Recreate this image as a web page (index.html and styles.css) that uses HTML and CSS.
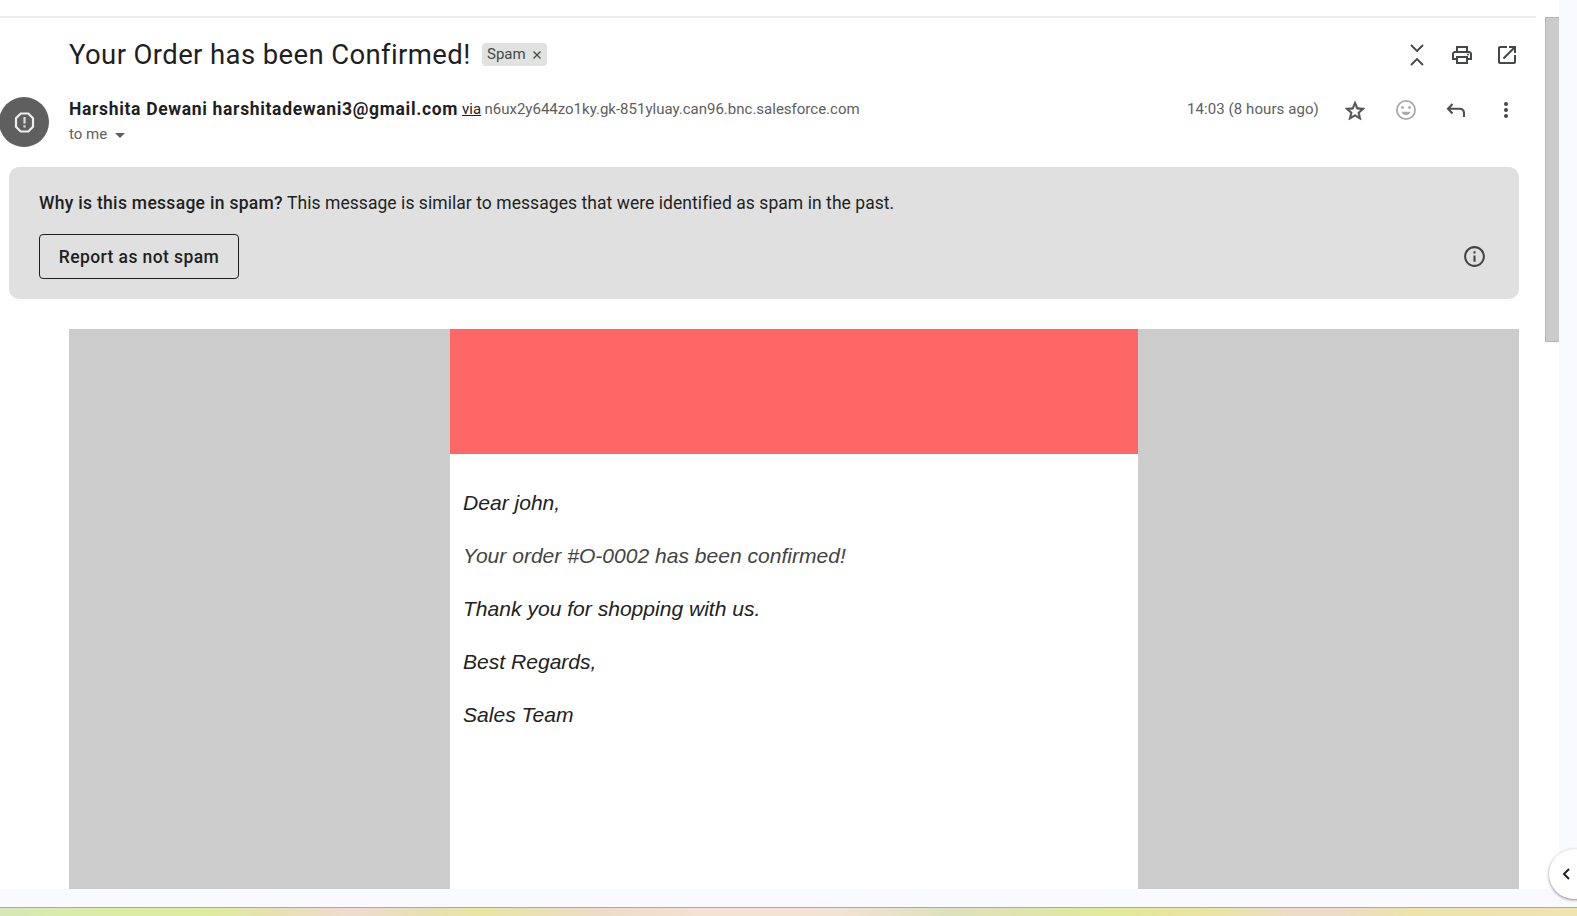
FILE: index.html
```html
<!DOCTYPE html>
<html lang="en">
<head>
<meta charset="utf-8">
<title>Your Order has been Confirmed!</title>
<link rel="stylesheet" href="styles.css">
</head>
<body>
<div class="window">
  <main class="mail">
    <div class="toolbar"></div>
    <header class="subject-row">
      <h1 class="subject">Your Order has been Confirmed!</h1>
      <span class="chip"><span class="chip-label">Spam</span><svg class="chip-x" viewBox="0 0 8 8"><path d="M.5.5l7 7M7.500.5l-7 7"/></svg></span>
      <div class="actions">
        <svg class="icon" viewBox="0 0 24 24"><path d="M6 2l6 6 6-6M6 22l6-6 6 6" fill="none" stroke="#444746" stroke-width="1.800"/></svg>
        <svg class="icon" viewBox="0 0 24 24"><path d="M19 8h-1V3H6v5H5c-1.660 0-3 1.340-3 3v6h4v4h12v-4h4v-6c0-1.660-1.340-3-3-3zM8 5h8v3H8V5zm8 14H8v-4h8v4zm2-4v-2H6v2H4v-4c0-.55.450-1 1-1h14c.55 0 1 .450 1 1v4h-2z"/><circle cx="18" cy="11.500" r="1"/></svg>
        <svg class="icon" viewBox="0 0 24 24"><path d="M19 19H5V5h7V3H5c-1.110 0-2 .9-2 2v14c0 1.100.890 2 2 2h14c1.100 0 2-.9 2-2v-7h-2v7zM14 3v2h3.590l-9.830 9.830 1.410 1.410L19 6.410V10h2V3h-7z"/></svg>
      </div>
    </header>
    <section class="sender-row">
      <svg class="avatar" viewBox="0 0 50 50"><circle cx="25" cy="25" r="25" fill="#5f5f5f"/><path d="M21.700 16.500h7.600l4.700 4.700v8.600L29.300 34.500h-7.600L17 29.800v-8.600z" fill="none" stroke="#eee" stroke-width="2.200"/><path d="M25.500 20v6.600M25.500 28.300v2.200" stroke="#ddd" stroke-width="2.200"/></svg>
      <div class="who">
        <div class="from"><b class="name">Harshita Dewani harshitadewani3@gmail.com</b><span class="via">via</span><span class="domain">n6ux2y644zo1ky.gk-851yluay.can96.bnc.salesforce.com</span></div>
        <div class="to"><span>to me</span><i class="caret"></i></div>
      </div>
      <div class="meta">
        <span class="time">14:03 (8 hours ago)</span>
        <svg class="icon star" viewBox="0 0 24 24"><path d="M22 9.240l-7.190-.620L12 2 9.190 8.630 2 9.240l5.460 4.730L5.820 21 12 17.270 18.180 21l-1.630-7.030L22 9.240zM12 15.400l-3.760 2.270 1-4.280-3.320-2.880 4.380-.380L12 6.100l1.710 4.040 4.380.380-3.320 2.880 1 4.280L12 15.400z"/></svg>
        <svg class="icon smile" viewBox="0 0 24 24"><circle cx="12" cy="12" r="9.100" fill="none" stroke="#aaa" stroke-width="1.800"/><circle cx="8.500" cy="9.500" r="1.400"/><circle cx="15.500" cy="9.500" r="1.400"/><path d="M7.500 13.700h9c-.7 2.200-2.400 3.400-4.500 3.400s-3.800-1.200-4.500-3.400z"/></svg>
        <svg class="icon reply" viewBox="0 0 24 24"><path d="M8.500 6L4 10.700l4.500 4.700M4 10.700h11.500c3 0 4.500 1.600 4.500 4.500v3.800" fill="none" stroke="#505050" stroke-width="2.100"/></svg>
        <svg class="icon more" viewBox="0 0 24 24"><circle cx="12" cy="6" r="2"/><circle cx="12" cy="12" r="2"/><circle cx="12" cy="18" r="2"/></svg>
      </div>
    </section>
    <section class="banner">
      <p class="reason"><b class="why">Why is this message in spam?</b><span class="because">This message is similar to messages that were identified as spam in the past.</span></p>
      <div class="banner-actions">
        <button class="report">Report as not spam</button>
        <svg class="info" viewBox="0 0 24 24"><path d="M11 7h2v2h-2zm0 4h2v6h-2zm1-9C6.480 2 2 6.480 2 12s4.480 10 10 10 10-4.480 10-10S17.520 2 12 2zm0 18c-4.410 0-8-3.590-8-8s3.590-8 8-8 8 3.590 8 8-3.590 8-8 8z"/></svg>
      </div>
    </section>
    <section class="message">
      <article class="letter">
        <div class="hero"></div>
        <div class="copy">
          <p>Dear john,</p>
          <p class="soft">Your order #O-0002 has been confirmed!</p>
          <p>Thank you for shopping with us.</p>
          <p>Best Regards,</p>
          <p>Sales Team</p>
        </div>
      </article>
    </section>
  </main>
  <div class="scrollbar"><div class="thumb"></div></div>
  <button class="panel-toggle"><svg viewBox="0 0 8 12"><path d="M7 1L2 6l5 5"/></svg></button>
</div>
<div class="desktop"></div>
</body>
</html>
```
FILE: styles.css
```css
* { box-sizing: border-box; }
body { margin: 0; width: 1577px; height: 916px; overflow: hidden; display: flex; flex-direction: column; background: #f8faff; color: #202124; font-family: Roboto, "Liberation Sans", sans-serif; }
h1, p { margin: 0; font-weight: 400; }
svg { display: block; flex: none; }
button { padding: 0; font: inherit; color: inherit; }
h1, span, b { white-space: nowrap; }
.window { position: relative; display: flex; height: 907px; overflow: hidden; }
.mail { display: flex; flex-direction: column; width: 1545px; height: 889px; background: #fff; }
.toolbar { flex: none; width: 1536px; height: 18px; border-bottom: 2px solid #eee; }
.subject-row { display: flex; flex: none; align-items: center; height: 73px; padding: 1px 26px 0 69px; }
.subject { width: 413px; font-size: 27.500px; line-height: 36px; letter-spacing: .38px; color: #1f1f1f; }
.chip { display: flex; align-items: center; width: 65px; height: 23px; padding: 0 6px 0 5px; margin-top: -1px; justify-content: space-between; border-radius: 4px; background: #e0e2e0; color: #444746; font-size: 15px; }
.chip-label { padding-bottom: 2px; }
.chip-x { width: 8px; height: 8px; stroke: #444746; stroke-width: 1.300; }
.actions { display: flex; gap: 21px; margin-left: auto; }
.icon { width: 24px; height: 24px; fill: #444746; }
.sender-row { display: flex; flex: none; height: 76px; padding-right: 27px; }
.avatar { width: 50px; height: 50px; margin: 6px 0 0 -1px; }
.who { margin-left: 20px; padding-top: 6px; }
.from { display: flex; height: 25px; align-items: center; line-height: 25px; }
.name { width: 393px; font-size: 17.500px; letter-spacing: .66px; color: #1f1f1f; }
.via { width: 22.500px; font-size: 15px; text-decoration: underline; color: #222; }
.domain { font-size: 15px; color: #5e5e5e; }
.to { display: flex; align-items: center; gap: 8px; height: 24px; font-size: 15px; color: #5e5e5e; }
.caret { border: 5px solid transparent; border-top-color: #5e5e5e; border-bottom: 0; margin-top: 2px; }
.meta { display: flex; align-items: center; gap: 26px; height: 25px; margin: 6px 0 0 auto; }
.time { width: 130px; padding-bottom: 2px; font-size: 15px; letter-spacing: .08px; color: #5e5e5e; }
.star { margin-right: 1px; margin-top: 2px; fill: #505050; stroke: #505050; stroke-width: .5; }
.smile { fill: #aaa; }
.banner { flex: none; width: 1510px; height: 132px; margin-left: 9px; padding: 23px 30px 20px; border-radius: 10px; background: #e0e0e0; }
.reason { display: flex; height: 26px; align-items: center; font-size: 17.500px; color: #1f1f1f; }
.why { width: 248px; font-weight: 500; letter-spacing: .3px; }
.because { letter-spacing: .055px; }
.banner-actions { display: flex; align-items: center; justify-content: space-between; margin-top: 18px; padding-right: 2px; }
.report { width: 200px; height: 45px; border: 1.500px solid #1f1f1f; border-radius: 4px; background: none; font-size: 17.500px; font-weight: 500; letter-spacing: .4px; color: #1f1f1f; }
.info { width: 25px; height: 25px; fill: #444; }
.message { display: flex; flex: none; justify-content: center; width: 1450px; height: 560px; margin: 30px 0 0 69px; background: #ccc; }
.letter { width: 688px; background: #fff; }
.hero { height: 125px; background: #f66; }
.copy { padding: 36px 13px 0; font: italic 21.070px/26px "Liberation Sans", Arial, sans-serif; color: #222; }
.copy p { height: 26px; margin-bottom: 27px; }
.copy .soft { color: #444; }
.scrollbar { width: 14px; height: 889px; padding-top: 17px; background: #fff; }
.thumb { height: 325px; border: 1px solid #b5b5b5; border-right: 0; background: #cbcbcb; }
.panel-toggle { position: absolute; left: 1549px; top: 849px; width: 50px; height: 50px; border: 0; border-radius: 25px; background: #fff; box-shadow: 0 1px 3px #0007; }
.panel-toggle svg { width: 8px; height: 12px; margin-left: 13px; fill: none; stroke: #222; stroke-width: 2; }
.desktop { height: 9px; border-top: 1px solid #aaa; background: linear-gradient(90deg, #d8e6b8 0, #d9ecab 60px, #deeb9f 210px, #e9dfb4 280px, #efdcd0 350px, #e9dfb4 420px, #e9e4a4 480px, #ecdcc4 590px, #f5e2d2 700px, #f3e3d2 840px, #dee1bd 950px, #e1e99b 1110px, #eae3a3 1210px, #ecdcc6 1290px, #ecdcc6 1340px, #ede3ab 1410px, #f0e4b2 1577px); }
```
